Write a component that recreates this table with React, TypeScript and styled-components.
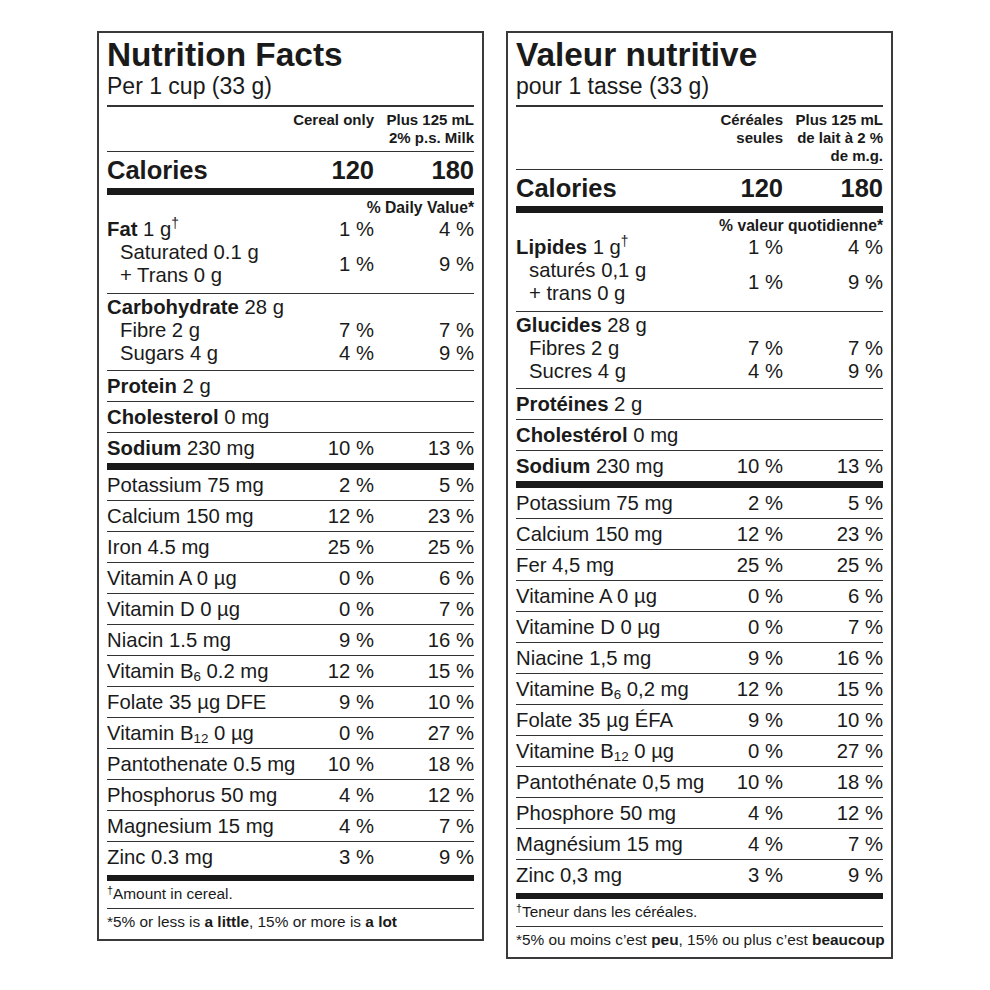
import React from "react";
import styled, { createGlobalStyle } from "styled-components";

const Global = createGlobalStyle`
  html, body { margin: 0; padding: 0; background: #fff; }
  body { font-family: "Liberation Sans", Arial, Helvetica, sans-serif; color: #1a1a1a; }
`;

const Wrap = styled.main`
  display: flex;
  align-items: flex-start;
  gap: 22px;
  padding: 31px 0 0 97px;
`;

const Panel = styled.section`
  width: 387px;
  box-sizing: border-box;
  border: 2px solid #3a3a3a;
  padding: 4px 8px 7px;
  background: #fff;
`;

const Title = styled.h1`
  margin: 0;
  font-weight: 700;
  font-size: 33.4px;
  line-height: 36px;
  color: #1a1a1a;
`;

const Serving = styled.div`
  font-size: 23px;
  line-height: 26px;
`;

const Rule = styled.div<{ $h: number; $mt?: number }>`
  height: ${(p) => p.$h}px;
  margin-top: ${(p) => p.$mt ?? 0}px;
  background: ${(p) => (p.$h > 2 ? "#1a1a1a" : "#333")};
`;

const HeadRow = styled.div`
  display: flex;
  align-items: flex-start;
  padding: 4px 0;
  border-bottom: 1px solid #333;
  font-weight: 700;
  font-size: 15px;
  line-height: 18px;
`;

const Spacer = styled.div`
  flex: 1 1 0;
`;

const HeadCell = styled.div`
  width: 100px;
  flex: none;
  text-align: right;
  white-space: nowrap;
`;

const CalRow = styled.div`
  display: flex;
  padding-top: 3px;
  font-weight: 700;
  font-size: 25.5px;
  line-height: 30px;
`;

const DV = styled.div`
  padding-top: 4px;
  text-align: right;
  font-weight: 700;
  font-size: 15.7px;
  line-height: 18px;
`;

const Group = styled.div<{ $pt: number; $pb: number }>`
  padding: ${(p) => p.$pt}px 0 ${(p) => p.$pb}px;
  border-bottom: 1px solid #333;
`;

const Line = styled.div`
  display: flex;
  align-items: center;
  font-size: 20.3px;
  line-height: 23px;
`;

const Row = styled.div<{ $last?: boolean }>`
  display: flex;
  align-items: center;
  height: 30px;
  font-size: 20.3px;
  line-height: 23px;
  border-bottom: ${(p) => (p.$last ? "none" : "1px solid #333")};
`;

const Name = styled.div<{ $indent?: boolean }>`
  flex: 1 1 0;
  min-width: 0;
  white-space: nowrap;
  padding-left: ${(p) => (p.$indent ? "13px" : "0")};
`;

const Val = styled.div`
  width: 100px;
  flex: none;
  text-align: right;
  white-space: nowrap;
`;

const B = styled.b`
  font-weight: 700;
`;

const Sup = styled.sup`
  font-size: 0.68em;
  line-height: 0;
  vertical-align: 0.55em;
`;

const Sub = styled.sub`
  font-size: 0.66em;
  line-height: 0;
  vertical-align: -0.24em;
`;

const Note = styled.div<{ $rule?: boolean }>`
  font-size: 15.4px;
  line-height: 20px;
  padding: 3px 0 ${(p) => (p.$rule ? 4 : 0)}px;
  border-bottom: ${(p) => (p.$rule ? "1px solid #333" : "none")};
  white-space: nowrap;
`;

const NoteMark = styled.sup`
  font-size: 0.7em;
  line-height: 0;
  vertical-align: 0.45em;
`;

const pct = (n: number) => `${n}\u00a0%`;

type Item = [React.ReactNode, number, number];

type Label = {
  title: string;
  serving: string;
  headA: React.ReactNode;
  headB: React.ReactNode;
  dv: string;
  fat: React.ReactNode;
  sat: React.ReactNode;
  trans: React.ReactNode;
  carb: React.ReactNode;
  fibre: string;
  sugars: string;
  protein: React.ReactNode;
  chol: React.ReactNode;
  sodium: React.ReactNode;
  minerals: Item[];
  note1: string;
  note2: React.ReactNode;
};

const en: Label = {
  title: "Nutrition Facts",
  serving: "Per 1 cup (33 g)",
  headA: "Cereal only",
  headB: (
    <>
      Plus 125 mL
      <br />
      2% p.s. Milk
    </>
  ),
  dv: "% Daily Value*",
  fat: (
    <>
      <B>Fat</B> 1 g<Sup>†</Sup>
    </>
  ),
  sat: "Saturated 0.1 g",
  trans: "+ Trans 0 g",
  carb: (
    <>
      <B>Carbohydrate</B> 28 g
    </>
  ),
  fibre: "Fibre 2 g",
  sugars: "Sugars 4 g",
  protein: (
    <>
      <B>Protein</B> 2 g
    </>
  ),
  chol: (
    <>
      <B>Cholesterol</B> 0 mg
    </>
  ),
  sodium: (
    <>
      <B>Sodium</B> 230 mg
    </>
  ),
  minerals: [
    ["Potassium 75 mg", 2, 5],
    ["Calcium 150 mg", 12, 23],
    ["Iron 4.5 mg", 25, 25],
    ["Vitamin A 0 µg", 0, 6],
    ["Vitamin D 0 µg", 0, 7],
    ["Niacin 1.5 mg", 9, 16],
    [
      <>
        Vitamin B<Sub>6</Sub> 0.2 mg
      </>,
      12,
      15,
    ],
    ["Folate 35 µg DFE", 9, 10],
    [
      <>
        Vitamin B<Sub>12</Sub> 0 µg
      </>,
      0,
      27,
    ],
    ["Pantothenate 0.5 mg", 10, 18],
    ["Phosphorus 50 mg", 4, 12],
    ["Magnesium 15 mg", 4, 7],
    ["Zinc 0.3 mg", 3, 9],
  ],
  note1: "Amount in cereal.",
  note2: (
    <>
      *5% or less is <B>a little</B>, 15% or more is <B>a lot</B>
    </>
  ),
};

const fr: Label = {
  title: "Valeur nutritive",
  serving: "pour 1 tasse (33 g)",
  headA: (
    <>
      Céréales
      <br />
      seules
    </>
  ),
  headB: (
    <>
      Plus 125 mL
      <br />
      de lait à 2 %
      <br />
      de m.g.
    </>
  ),
  dv: "% valeur quotidienne*",
  fat: (
    <>
      <B>Lipides</B> 1 g<Sup>†</Sup>
    </>
  ),
  sat: "saturés 0,1 g",
  trans: "+ trans 0 g",
  carb: (
    <>
      <B>Glucides</B> 28 g
    </>
  ),
  fibre: "Fibres 2 g",
  sugars: "Sucres 4 g",
  protein: (
    <>
      <B>Protéines</B> 2 g
    </>
  ),
  chol: (
    <>
      <B>Cholestérol</B> 0 mg
    </>
  ),
  sodium: (
    <>
      <B>Sodium</B> 230 mg
    </>
  ),
  minerals: [
    ["Potassium 75 mg", 2, 5],
    ["Calcium 150 mg", 12, 23],
    ["Fer 4,5 mg", 25, 25],
    ["Vitamine A 0 µg", 0, 6],
    ["Vitamine D 0 µg", 0, 7],
    ["Niacine 1,5 mg", 9, 16],
    [
      <>
        Vitamine B<Sub>6</Sub> 0,2 mg
      </>,
      12,
      15,
    ],
    ["Folate 35 µg ÉFA", 9, 10],
    [
      <>
        Vitamine B<Sub>12</Sub> 0 µg
      </>,
      0,
      27,
    ],
    ["Pantothénate 0,5 mg", 10, 18],
    ["Phosphore 50 mg", 4, 12],
    ["Magnésium 15 mg", 4, 7],
    ["Zinc 0,3 mg", 3, 9],
  ],
  note1: "Teneur dans les céréales.",
  note2: (
    <>
      *5% ou moins c’est <B>peu</B>, 15% ou plus c’est <B>beaucoup</B>
    </>
  ),
};

const FactsPanel: React.FC<{ d: Label }> = ({ d }) => (
  <Panel>
    <Title>{d.title}</Title>
    <Serving>{d.serving}</Serving>
    <Rule $h={2} $mt={6} />
    <HeadRow>
      <Spacer />
      <HeadCell>{d.headA}</HeadCell>
      <HeadCell>{d.headB}</HeadCell>
    </HeadRow>
    <CalRow>
      <Name>Calories</Name>
      <Val>120</Val>
      <Val>180</Val>
    </CalRow>
    <Rule $h={7} $mt={3} />
    <DV>{d.dv}</DV>
    <Group $pt={1} $pb={6}>
      <Line>
        <Name>{d.fat}</Name>
        <Val>{pct(1)}</Val>
        <Val>{pct(4)}</Val>
      </Line>
      <Line>
        <Name $indent>
          {d.sat}
          <br />
          {d.trans}
        </Name>
        <Val>{pct(1)}</Val>
        <Val>{pct(9)}</Val>
      </Line>
    </Group>
    <Group $pt={2} $pb={5}>
      <Line>
        <Name>{d.carb}</Name>
      </Line>
      <Line>
        <Name $indent>{d.fibre}</Name>
        <Val>{pct(7)}</Val>
        <Val>{pct(7)}</Val>
      </Line>
      <Line>
        <Name $indent>{d.sugars}</Name>
        <Val>{pct(4)}</Val>
        <Val>{pct(9)}</Val>
      </Line>
    </Group>
    <Row>
      <Name>{d.protein}</Name>
    </Row>
    <Row>
      <Name>{d.chol}</Name>
    </Row>
    <Row $last>
      <Name>{d.sodium}</Name>
      <Val>{pct(10)}</Val>
      <Val>{pct(13)}</Val>
    </Row>
    <Rule $h={7} />
    {d.minerals.map(([n, a, b], i) => (
      <Row key={i} $last={i === d.minerals.length - 1}>
        <Name>{n}</Name>
        <Val>{pct(a)}</Val>
        <Val>{pct(b)}</Val>
      </Row>
    ))}
    <Rule $h={6} $mt={3} />
    <Note $rule>
      <NoteMark>†</NoteMark>
      {d.note1}
    </Note>
    <Note>{d.note2}</Note>
  </Panel>
);

export default function App() {
  return (
    <>
      <Global />
      <Wrap>
        <FactsPanel d={en} />
        <FactsPanel d={fr} />
      </Wrap>
    </>
  );
}
